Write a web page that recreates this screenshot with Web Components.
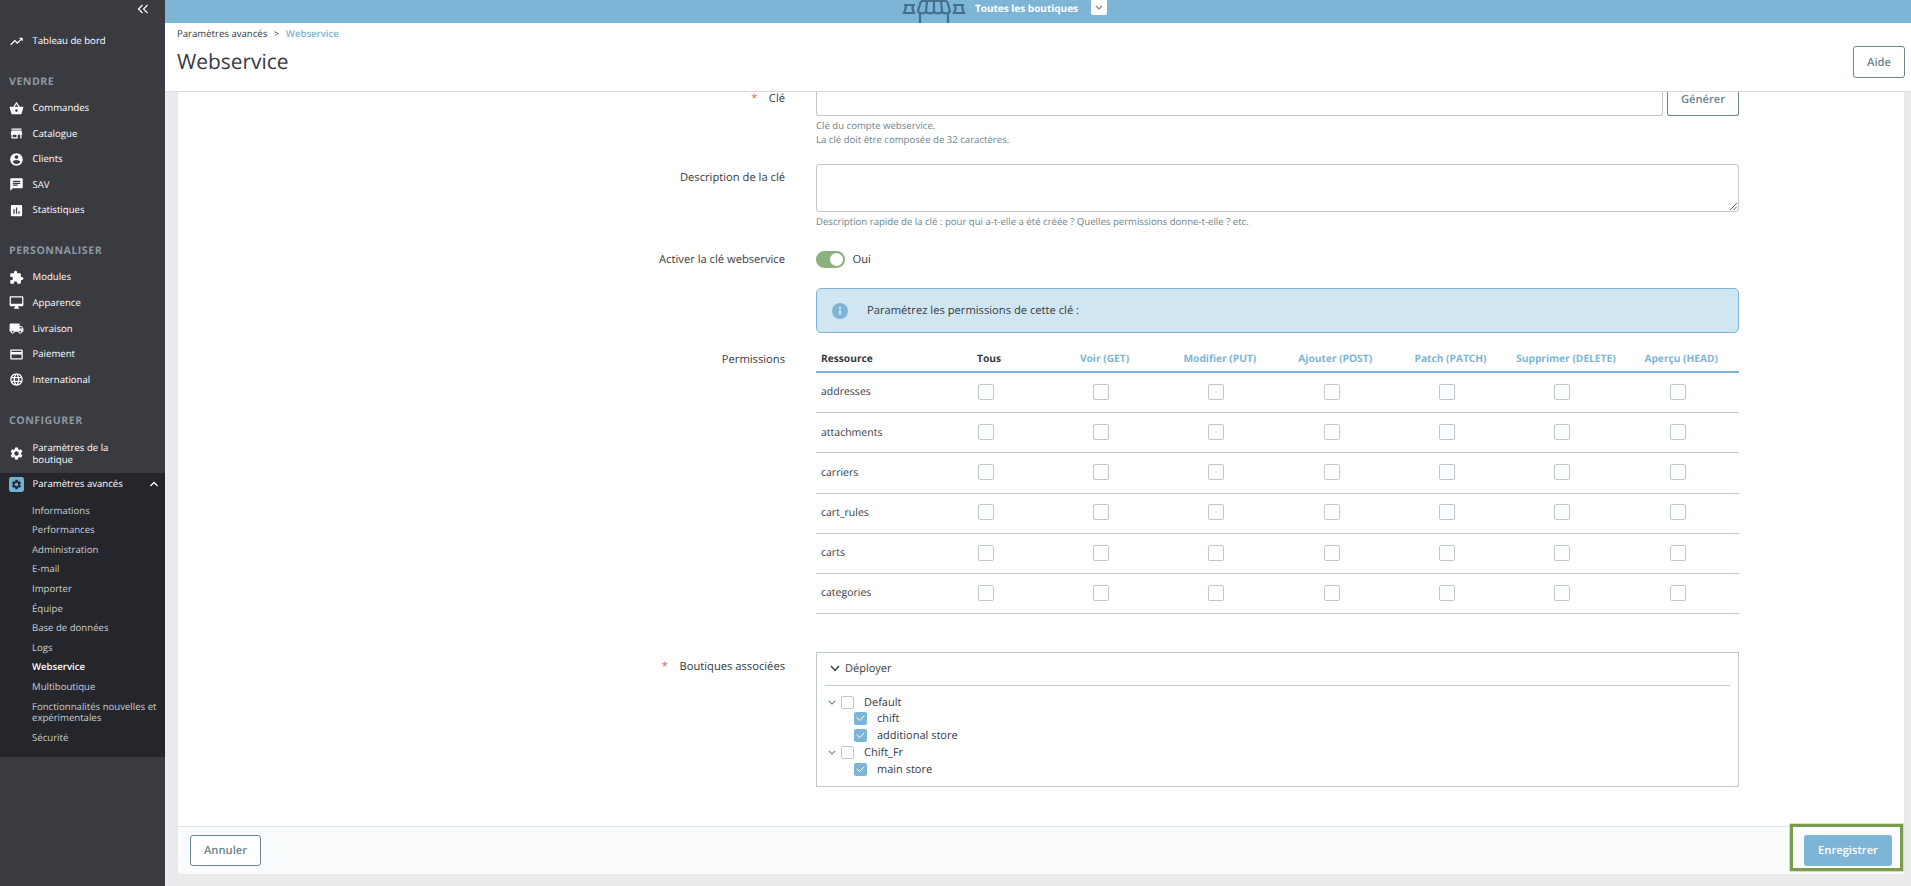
<!DOCTYPE html>
<html lang="fr">
<head>
<meta charset="utf-8">
<title>Webservice</title>
<style>
  html, body { margin: 0; height: 886px; overflow: hidden; }
  body { font-family: "Open Sans", "Noto Sans", sans-serif; font-size: 11px; color: #363a41; background: #e9ebed; text-rendering: geometricPrecision; }
  ps-app { width: 1911px; height: 886px; }
</style>
</head>
<body>
<ps-app>
  <ps-sidebar slot="side">
    <nav-item icon="trending" top>Tableau de bord</nav-item>
    <nav-title>VENDRE</nav-title>
    <nav-item icon="basket">Commandes</nav-item>
    <nav-item icon="store">Catalogue</nav-item>
    <nav-item icon="account">Clients</nav-item>
    <nav-item icon="chat">SAV</nav-item>
    <nav-item icon="stats">Statistiques</nav-item>
    <nav-title>PERSONNALISER</nav-title>
    <nav-item icon="puzzle">Modules</nav-item>
    <nav-item icon="desktop">Apparence</nav-item>
    <nav-item icon="truck">Livraison</nav-item>
    <nav-item icon="card">Paiement</nav-item>
    <nav-item icon="globe">International</nav-item>
    <nav-title style="margin-top:1px">CONFIGURER</nav-title>
    <nav-item icon="settings" tall>Paramètres de la boutique</nav-item>
    <nav-group>
      <nav-item icon="advanced" open>Paramètres avancés</nav-item>
      <sub-item>Informations</sub-item>
      <sub-item>Performances</sub-item>
      <sub-item>Administration</sub-item>
      <sub-item>E-mail</sub-item>
      <sub-item>Importer</sub-item>
      <sub-item>Équipe</sub-item>
      <sub-item>Base de données</sub-item>
      <sub-item>Logs</sub-item>
      <sub-item current>Webservice</sub-item>
      <sub-item>Multiboutique</sub-item>
      <sub-item>Fonctionnalités nouvelles et expérimentales</sub-item>
      <sub-item>Sécurité</sub-item>
    </nav-group>
  </ps-sidebar>
  <ps-topbar slot="top"></ps-topbar>
  <ps-header slot="top"></ps-header>
  <ps-card slot="main">
    <form-row label="Clé" required style="--label-top:-1.5px">
      <key-input></key-input>
      <help-text>Clé du compte webservice.<br>La clé doit être composée de 32 caractères.</help-text>
    </form-row>
    <form-row label="Description de la clé" style="--row-top:16.5px;--label-top:5.5px">
      <desc-area></desc-area>
      <help-text>Description rapide de la clé : pour qui a-t-elle a été créée ? Quelles permissions donne-t-elle ? etc.</help-text>
    </form-row>
    <form-row label="Activer la clé webservice" style="--row-top:22px;--label-top:1px">
      <ps-switch>Oui</ps-switch>
    </form-row>
    <form-row style="--row-top:20px">
      <info-alert>Paramétrez les permissions de cette clé :</info-alert>
    </form-row>
    <form-row label="Permissions" style="--row-top:17.5px;--label-top:1px">
      <perm-table></perm-table>
    </form-row>
    <form-row label="Boutiques associées" required style="--row-top:38px;--label-top:6.5px">
      <shop-tree></shop-tree>
    </form-row>
    <ps-btn slot="left" style="--w:71px;--h:31px">Annuler</ps-btn>
    <save-btn slot="right">Enregistrer</save-btn>
  </ps-card>
</ps-app>

<script>
const ICONS = {
  trending: 'M16 6l2.29 2.29-4.88 4.88-4-4L2 16.59 3.41 18l6-6 4 4 6.3-6.29L22 12V6z',
  basket: 'M17.21 9l-4.38-6.56c-.19-.28-.51-.42-.83-.42-.32 0-.64.14-.83.43L6.79 9H2c-.55 0-1 .45-1 1 0 .09.01.18.04.27l2.54 9.27c.23.84 1 1.46 1.92 1.46h13c.92 0 1.69-.62 1.93-1.46l2.54-9.27L23 10c0-.55-.45-1-1-1h-4.79zM9 9l3-4.4L15 9H9zm3 8c-1.1 0-2-.9-2-2s.9-2 2-2 2 .9 2 2-.9 2-2 2z',
  store: 'M20 4H4v2h16V4zm1 10v-2l-1-5H4l-1 5v2h1v6h10v-6h4v6h2v-6h1zm-9 4H6v-4h6v4z',
  account: 'M12 2C6.48 2 2 6.48 2 12s4.48 10 10 10 10-4.48 10-10S17.52 2 12 2zm0 3c1.66 0 3 1.34 3 3s-1.34 3-3 3-3-1.34-3-3 1.34-3 3-3zm0 14.2c-2.5 0-4.71-1.28-6-3.22.03-1.99 4-3.08 6-3.08 1.99 0 5.97 1.09 6 3.08-1.29 1.94-3.5 3.22-6 3.22z',
  chat: 'M20 2H4c-1.1 0-1.99.9-1.99 2L2 22l4-4h14c1.1 0 2-.9 2-2V4c0-1.1-.9-2-2-2zM6 9h12v2H6V9zm8 5H6v-2h8v2zm4-6H6V6h12v2z',
  stats: 'M19 3H5c-1.1 0-2 .9-2 2v14c0 1.1.9 2 2 2h14c1.1 0 2-.9 2-2V5c0-1.1-.9-2-2-2zM9 17H7v-7h2v7zm4 0h-2V7h2v10zm4 0h-2v-4h2v4z',
  puzzle: 'M20.5 11H19V7c0-1.1-.9-2-2-2h-4V3.5C13 2.12 11.88 1 10.5 1S8 2.12 8 3.5V5H4c-1.1 0-1.99.9-1.99 2v3.8H3.5c1.49 0 2.7 1.21 2.7 2.7s-1.21 2.7-2.7 2.7H2V20c0 1.1.9 2 2 2h3.8v-1.5c0-1.49 1.21-2.7 2.7-2.7 1.49 0 2.7 1.21 2.7 2.7V22H17c1.1 0 2-.9 2-2v-4h1.5c1.38 0 2.5-1.12 2.5-2.5S21.88 11 20.5 11z',
  desktop: 'M21 2H3c-1.1 0-2 .9-2 2v12c0 1.1.9 2 2 2h7l-2 3v1h8v-1l-2-3h7c1.1 0 2-.9 2-2V4c0-1.1-.9-2-2-2zm0 12H3V4h18v10z',
  truck: 'M20 8h-3V4H3c-1.1 0-2 .9-2 2v11h2c0 1.66 1.34 3 3 3s3-1.34 3-3h6c0 1.66 1.34 3 3 3s3-1.34 3-3h2v-5l-3-4zM6 18.5c-.83 0-1.5-.67-1.5-1.5s.67-1.5 1.5-1.5 1.5.67 1.5 1.5-.67 1.5-1.5 1.5zm13.5-9l1.96 2.5H17V9.5h2.5zm-1.5 9c-.83 0-1.5-.67-1.5-1.5s.67-1.5 1.5-1.5 1.5.67 1.5 1.5-.67 1.5-1.5 1.5z',
  card: 'M20 4H4c-1.11 0-1.99.89-1.99 2L2 18c0 1.11.89 2 2 2h16c1.11 0 2-.89 2-2V6c0-1.11-.89-2-2-2zm0 14H4v-6h16v6zm0-10H4V6h16v2z',
  globe: 'M11.99 2C6.47 2 2 6.48 2 12s4.47 10 9.99 10C17.52 22 22 17.52 22 12S17.52 2 11.99 2zm6.93 6h-2.95c-.32-1.25-.78-2.45-1.38-3.56 1.84.63 3.37 1.91 4.33 3.56zM12 4.04c.83 1.2 1.48 2.53 1.91 3.96h-3.82c.43-1.43 1.08-2.76 1.91-3.96zM4.26 14C4.1 13.36 4 12.69 4 12s.1-1.36.26-2h3.38c-.08.66-.14 1.32-.14 2 0 .68.06 1.34.14 2H4.26zm.82 2h2.95c.32 1.25.78 2.45 1.38 3.56-1.84-.63-3.37-1.9-4.33-3.56zm2.95-8H5.08c.96-1.66 2.49-2.93 4.33-3.56C8.81 5.55 8.35 6.75 8.03 8zM12 19.96c-.83-1.2-1.48-2.53-1.91-3.96h3.82c-.43 1.43-1.08 2.76-1.91 3.96zM14.34 14H9.66c-.09-.66-.16-1.32-.16-2 0-.68.07-1.35.16-2h4.68c.09.65.16 1.32.16 2 0 .68-.07 1.34-.16 2zm.25 5.56c.6-1.11 1.06-2.31 1.38-3.56h2.95c-.96 1.65-2.49 2.93-4.33 3.56zM16.36 14c.08-.66.14-1.32.14-2 0-.68-.06-1.34-.14-2h3.38c.16.64.26 1.31.26 2s-.1 1.36-.26 2h-3.38z',
  settings: 'M19.14 12.94c.04-.3.06-.61.06-.94 0-.32-.02-.64-.07-.94l2.03-1.58c.18-.14.23-.41.12-.61l-1.92-3.32c-.12-.22-.37-.29-.59-.22l-2.39.96c-.5-.38-1.03-.7-1.62-.94l-.36-2.54c-.04-.24-.24-.41-.48-.41h-3.84c-.24 0-.43.17-.47.41l-.36 2.54c-.59.24-1.13.57-1.62.94l-2.39-.96c-.22-.08-.47 0-.59.22L2.74 8.87c-.12.21-.08.47.12.61l2.03 1.58c-.05.3-.09.63-.09.94s.02.64.07.94l-2.03 1.58c-.18.14-.23.41-.12.61l1.92 3.32c.12.22.37.29.59.22l2.39-.96c.5.38 1.03.7 1.62.94l.36 2.54c.05.24.24.41.48.41h3.84c.24 0 .44-.17.47-.41l.36-2.54c.59-.24 1.13-.56 1.62-.94l2.39.96c.22.08.47 0 .59-.22l1.92-3.32c.12-.22.07-.47-.12-.61l-2.01-1.58zM12 15.6c-1.98 0-3.6-1.62-3.6-3.6s1.62-3.6 3.6-3.6 3.6 1.62 3.6 3.6-1.62 3.6-3.6 3.6z'
};

class PsApp extends HTMLElement {
  constructor() {
    super();
    this.attachShadow({mode: 'open'}).innerHTML = `
      <style>
        :host { display: grid; grid-template-columns: 165px 1fr; }
        .right { display: flex; flex-direction: column; min-width: 0; height: 886px; overflow: hidden; }
        .main { flex: 1; min-height: 0; padding: 0 7px 12px 13px; display: flex; }
      </style>
      <slot name="side"></slot>
      <div class="right">
        <slot name="top"></slot>
        <div class="main"><slot name="main"></slot></div>
      </div>`;
  }
}

class PsSidebar extends HTMLElement {
  constructor() {
    super();
    this.attachShadow({mode: 'open'}).innerHTML = `
      <style>
        :host { display: block; background: #393b41; height: 886px; position: relative; }
        .collapse { position: absolute; top: 3px; left: 137px; width: 12px; height: 12px; }
        .list { padding-top: 28px; }
      </style>
      <svg class="collapse" viewBox="0 0 12 12" fill="none" stroke="#fff" stroke-width="1.2"><path d="M5.5 2 1.5 6l4 4M10.5 2l-4 4 4 4"/></svg>
      <div class="list"><slot></slot></div>`;
  }
}

class NavItem extends HTMLElement {
  constructor() {
    super();
    const name = this.getAttribute('icon');
    const advanced = name === 'advanced';
    const icon = advanced
      ? `<svg class="ic" viewBox="0 0 14 14"><rect width="14" height="14" x="0" y="0" rx="2" fill="#6fb2d6"/><g transform="translate(1.6 1.6) scale(.45)"><path fill="#26282d" d="${ICONS.settings}"/></g></svg>`
      : `<svg class="ic" viewBox="0 0 24 24"><path fill="#fff" d="${ICONS[name]}"/></svg>`;
    const chev = this.hasAttribute('open')
      ? `<svg class="up" viewBox="0 0 10 6" fill="none" stroke="#fff" stroke-width="1.3"><path d="M1.5 5 5 1.5 8.5 5"/></svg>` : '';
    this.attachShadow({mode: 'open'}).innerHTML = `
      <style>
        :host { display: block; color: #fff; }
        .row { display: flex; align-items: center; height: 25.6px; padding-left: 9px; position: relative; line-height: 12px; font-size: 9.6px; }
        :host([tall]) .row { height: 37.8px; }
        :host([tall]) .txt { width: 85px; }
        :host([top]) .row { height: 26px; }
        :host([open]) .row { height: 23px; margin-bottom: 5px; }
        .ic { width: 15px; height: 15px; flex: none; margin-right: 8.5px; }
        .up { position: absolute; left: 149px; top: 8.5px; width: 10px; height: 6px; }
        .txt { width: 120px; }
        :host([open]) .txt { white-space: nowrap; }
      </style>
      <div class="row">${icon}<span class="txt"><slot></slot></span>${chev}</div>`;
  }
}

class NavTitle extends HTMLElement {
  constructor() {
    super();
    this.attachShadow({mode: 'open'}).innerHTML = `
      <style>
        :host { display: block; height: 15px; padding: 20.6px 0 0 9px; margin-bottom: 5.7px; color: #8d98a1; font-size: 10.6px; letter-spacing: .5px; font-weight: 700; line-height: 15px; }
      </style><slot></slot>`;
  }
}

class NavGroup extends HTMLElement {
  constructor() {
    super();
    this.attachShadow({mode: 'open'}).innerHTML = `
      <style>:host { display: block; background: #24262b; height: 284px; }</style><slot></slot>`;
  }
}

class SubItem extends HTMLElement {
  constructor() {
    super();
    this.attachShadow({mode: 'open'}).innerHTML = `
      <style>
        :host { display: block; color: #c9ced3; font-size: 9.6px; line-height: 11.5px; padding: 4px 4px 4.1px 32px; }
        :host([current]) { color: #fff; font-weight: 600; }
      </style><slot></slot>`;
  }
}

class PsTopbar extends HTMLElement {
  constructor() {
    super();
    this.attachShadow({mode: 'open'}).innerHTML = `
      <style>
        :host { display: flex; height: 23px; flex: none; background: #7cb5d5; justify-content: center; overflow: hidden; color: #fff; font-weight: 700; font-size: 10px; line-height: 16px; }
        .in { display: flex; align-items: flex-start; margin-right: 67px; }
        .shop { width: 64px; height: 23px; margin: 0 9px 0 0; flex: none; }
        .arrow { width: 16px; height: 15px; margin-left: 13px; background: #fff; border-radius: 0 0 2px 2px; display: flex; align-items: center; justify-content: center; }
        .arrow svg { width: 8px; height: 5px; margin: 0; }
      </style>
      <div class="in">
        <svg class="shop" viewBox="0 0 64 23" fill="none" stroke="#44708c" stroke-width="2.2">
          <path d="M2 5h11M4 5c0 3-1 6-2 8h10c-1-2-2-5-1-8"/>
          <path d="M51 5h11M53 5c1 3 0 6-1 8h10c-1-2-2-5-2-8"/>
          <path d="M19 1H45M16 11l3-10M48 11 45 1M24 11l1-10M32 11V1M40 11 39 1"/>
          <path d="M16 11c0 3 8 3 8 0 0 3 8 3 8 0 0 3 8 3 8 0 0 3 8 3 8 0"/>
          <path d="M18 14v9M46 14v9"/>
        </svg>
        <span>Toutes les boutiques</span>
        <span class="arrow"><svg viewBox="0 0 8 5" fill="none" stroke="#6c868e" stroke-width="1.2"><path d="M.8.8 4 4 7.2.8"/></svg></span>
      </div>`;
  }
}

class PsHeader extends HTMLElement {
  constructor() {
    super();
    this.attachShadow({mode: 'open'}).innerHTML = `
      <style>
        :host { display: flex; flex: none; height: 68px; background: #fff; border-bottom: 1px solid #dfdfdf; padding: 0 6px 0 12px; justify-content: space-between; align-items: flex-start; }
        .crumb { font-size: 9.6px; line-height: 14px; margin-top: 4px; color: #363a41; }
        .crumb b { color: #7cb5d5; font-weight: 600; }
        .crumb i { font-style: normal; margin: 0 4px; }
        h1 { margin: 6px 0 0; font-size: 20.9px; font-weight: 400; line-height: 30px; color: #363a41; }
        ps-btn { margin-top: 23px; --w: 52px; }
      </style>
      <div>
        <div class="crumb">Paramètres avancés <i>&gt;</i> <b>Webservice</b></div>
        <h1>Webservice</h1>
      </div>
      <ps-btn>Aide</ps-btn>`;
  }
}

class PsBtn extends HTMLElement {
  constructor() {
    super();
    this.attachShadow({mode: 'open'}).innerHTML = `
      <style>
        :host { display: inline-flex; align-items: center; justify-content: center; box-sizing: border-box; width: var(--w, 72px); height: var(--h, 32px); border: 1px solid #6c868e; border-radius: 3px; color: #6c868e; font-weight: 600; font-size: 11.2px; background: #fff; flex: none; }
      </style><slot></slot>`;
  }
}

class SaveBtn extends HTMLElement {
  constructor() {
    super();
    this.attachShadow({mode: 'open'}).innerHTML = `
      <style>
        :host { display: inline-flex; align-items: center; justify-content: center; width: 88px; height: 31px; border-radius: 3px; background: #7cb5d5; color: #fff; font-weight: 600; font-size: 11.2px; position: relative; }
        .mark { position: absolute; left: -14px; right: -11px; top: -11px; bottom: -5px; border: 3px solid #7a9c4c; box-sizing: border-box; box-shadow: 0 0 0 .5px #a9c08a; pointer-events: none; }
      </style><slot></slot><span class="mark"></span>`;
  }
}

class PsCard extends HTMLElement {
  constructor() {
    super();
    this.attachShadow({mode: 'open'}).innerHTML = `
      <style>
        :host { display: flex; flex-direction: column; flex: 1; min-width: 0; background: #fff; border-radius: 0 0 3px 3px; box-shadow: 0 0 2px rgba(0,0,0,.08); }
        .body { flex: 1; min-height: 0; }
        .foot { height: 48px; flex: none; box-sizing: border-box; display: flex; justify-content: space-between; align-items: flex-start; padding: 8px 12px 0 12px; background: #fafbfc; border-top: 1px solid #dbe4ea; border-radius: 0 0 3px 3px; }
      </style>
      <div class="body"><slot></slot></div>
      <div class="foot"><slot name="left"></slot><slot name="right"></slot></div>`;
  }
}

class FormRow extends HTMLElement {
  constructor() {
    super();
    const label = this.getAttribute('label') || '';
    const req = this.hasAttribute('required') ? '<span class="req">*</span>' : '';
    this.attachShadow({mode: 'open'}).innerHTML = `
      <style>
        :host { display: grid; grid-template-columns: 607px 923px; column-gap: 31px; margin-top: var(--row-top, 0); }
        .label { text-align: right; font-size: 11.2px; line-height: 15px; margin-top: var(--label-top, 0); color: #363a41; }
        .req { color: #d9684c; margin-right: 11.5px; }
      </style>
      <div class="label">${req}${label}</div>
      <div class="field"><slot></slot></div>`;
  }
}

class KeyInput extends HTMLElement {
  constructor() {
    super();
    this.attachShadow({mode: 'open'}).innerHTML = `
      <style>
        :host { display: flex; gap: 4px; height: 24px; }
        .box { flex: 1; border: 1px solid #bcc9d2; border-top: 0; border-radius: 0 0 3px 3px; }
        ps-btn { --w: 72px; --h: 24px; border-top: 0; border-radius: 0 0 3px 3px; padding-bottom: 8px; }
      </style>
      <div class="box"></div><ps-btn>Générer</ps-btn>`;
  }
}

class HelpText extends HTMLElement {
  constructor() {
    super();
    this.attachShadow({mode: 'open'}).innerHTML = `
      <style>:host { display: block; margin-top: 2.5px; color: #6c868e; font-size: 9.6px; line-height: 14.5px; }</style><slot></slot>`;
  }
}

class DescArea extends HTMLElement {
  constructor() {
    super();
    this.attachShadow({mode: 'open'}).innerHTML = `
      <style>
        :host { display: block; box-sizing: border-box; height: 48px; border: 1px solid #bcc9d2; border-radius: 3px; position: relative; }
        svg { position: absolute; right: 1px; bottom: 1px; width: 8px; height: 8px; }
      </style>
      <svg viewBox="0 0 8 8" stroke="#444" stroke-width=".8"><path d="M1 8 8 1M4.5 8 8 4.5"/></svg>`;
  }
}

class PsSwitch extends HTMLElement {
  constructor() {
    super();
    this.attachShadow({mode: 'open'}).innerHTML = `
      <style>
        :host { display: flex; align-items: center; gap: 7.5px; font-size: 11.2px; height: 17px; }
        .track { width: 29px; height: 17px; border-radius: 9px; background: #8bb17f; position: relative; }
        .knob { position: absolute; right: 2px; top: 2px; width: 13px; height: 13px; border-radius: 50%; background: #fff; }
      </style>
      <span class="track"><span class="knob"></span></span><slot></slot>`;
  }
}

class InfoAlert extends HTMLElement {
  constructor() {
    super();
    this.attachShadow({mode: 'open'}).innerHTML = `
      <style>
        :host { display: flex; align-items: center; box-sizing: border-box; height: 45px; padding-left: 15px; background: #d0e6f2; border: 1px solid #7cb5d5; border-radius: 5px; font-size: 11.2px; }
        svg { width: 16px; height: 16px; margin-right: 19px; flex: none; }
      </style>
      <svg viewBox="0 0 16 16"><circle cx="8" cy="8" r="8" fill="#7cb5d5"/><rect x="7" y="7" width="2" height="5" fill="#d0e6f2"/><rect x="7" y="4" width="2" height="2" fill="#d0e6f2"/></svg>
      <slot></slot>`;
  }
}

class PsCheck extends HTMLElement {
  constructor() {
    super();
    this.attachShadow({mode: 'open'}).innerHTML = `
      <style>
        :host { display: inline-flex; box-sizing: border-box; width: var(--s, 16px); height: var(--s, 16px); border: 1px solid #bcc9d2; border-radius: 2px; background: #fff; flex: none; align-items: center; justify-content: center; }
        :host([checked]) { background: #7cb5d5; border-color: #7cb5d5; }
        svg { display: none; width: 9px; height: 7px; }
        :host([checked]) svg { display: block; }
      </style>
      <svg viewBox="0 0 9 7" fill="none" stroke="#fff" stroke-width="1"><path d="M.8 2.6 3.6 5.6 8.2 .8"/></svg>`;
  }
}

class PermTable extends HTMLElement {
  constructor() {
    super();
    const heads = ['Voir (GET)', 'Modifier (PUT)', 'Ajouter (POST)', 'Patch (PATCH)', 'Supprimer (DELETE)', 'Aperçu (HEAD)'];
    const rows = ['addresses', 'attachments', 'carriers', 'cart_rules', 'carts', 'categories'];
    const boxes = Array(7).fill('<span class="c"><ps-check></ps-check></span>').join('');
    this.attachShadow({mode: 'open'}).innerHTML = `
      <style>
        :host { display: block; }
        .r { display: grid; grid-template-columns: 112px repeat(7, 115.35px); align-items: center; border-bottom: 1px solid #bcc9d2; height: 37.7px; padding-bottom: 1.5px; }
        .h { height: 20.5px; padding-bottom: 0; border-bottom: 2px solid #7cb5d5; font-weight: 700; font-size: 10.2px; align-items: start; line-height: 15px; }
        .n { padding: 1px 0 0 5px; font-size: 10.5px; }
        .h .n { font-size: 10.2px; white-space: nowrap; padding-top: 0; }
        .c { display: flex; justify-content: center; }
        .h .c { color: #7cb5d5; white-space: nowrap; padding-left: 7px; }
        .h .t { color: #363a41; padding-left: 49px; }
      </style>
      <div class="r h"><span class="n">Ressource</span><span class="t">Tous</span>${heads.map(h => `<span class="c">${h}</span>`).join('')}</div>
      ${rows.map(r => `<div class="r"><span class="n">${r}</span>${boxes}</div>`).join('')}`;
  }
}

class ShopTree extends HTMLElement {
  constructor() {
    super();
    const chev = '<svg class="ch" viewBox="0 0 10 6" fill="none" stroke="#6c7c88" stroke-width="1.3"><path d="M1 1 5 5 9 1"/></svg>';
    const parent = n => `<div class="p">${chev}<ps-check></ps-check><span>${n}</span></div>`;
    const child = n => `<div class="k"><ps-check checked></ps-check><span>${n}</span></div>`;
    this.attachShadow({mode: 'open'}).innerHTML = `
      <style>
        :host { display: block; box-sizing: border-box; height: 135px; border: 1px solid #bcc9d2; padding: 0 8px; font-size: 11px; --s: 13px; }
        .top { display: flex; align-items: center; box-sizing: border-box; height: 33px; border-bottom: 1px solid #bcc9d2; padding: 0 0 1px 5px; font-size: 11px; }
        .top svg { width: 10px; height: 7px; margin-right: 5px; }
        .tree { padding-top: 7.5px; }
        .p, .k { display: flex; align-items: center; height: 16.8px; }
        .p { padding-left: 3px; }
        .ch { width: 8px; height: 5px; margin-right: 5px; flex: none; }
        .p span { margin-left: 10px; }
        .k { padding-left: 29px; }
        .k span { margin-left: 10px; }
      </style>
      <div class="top"><svg viewBox="0 0 10 7" fill="none" stroke="#363a41" stroke-width="1.4"><path d="M1 1 5 5.5 9 1"/></svg>Déployer</div>
      <div class="tree">
        ${parent('Default')}${child('chift')}${child('additional store')}${parent('Chift_Fr')}${child('main store')}
      </div>`;
  }
}

Object.entries({
  'ps-app': PsApp, 'ps-sidebar': PsSidebar, 'nav-item': NavItem, 'nav-title': NavTitle,
  'nav-group': NavGroup, 'sub-item': SubItem, 'ps-topbar': PsTopbar, 'ps-header': PsHeader,
  'ps-btn': PsBtn, 'save-btn': SaveBtn, 'ps-card': PsCard, 'form-row': FormRow, 'key-input': KeyInput,
  'help-text': HelpText, 'desc-area': DescArea, 'ps-switch': PsSwitch, 'info-alert': InfoAlert,
  'ps-check': PsCheck, 'perm-table': PermTable, 'shop-tree': ShopTree
}).forEach(([tag, cls]) => customElements.define(tag, cls));
</script>
</body>
</html>
